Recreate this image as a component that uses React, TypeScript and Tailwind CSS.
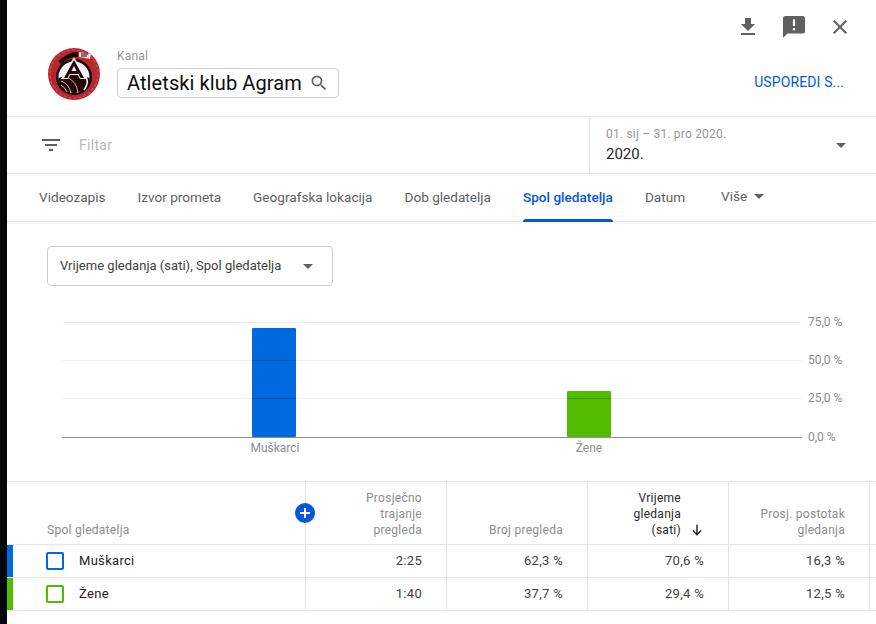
import React from "react";

const tabs = ["Videozapis", "Izvor prometa", "Geografska lokacija", "Dob gledatelja", "Spol gledatelja", "Datum"];

const rows = [
  { name: "Muškarci", color: "bg-[#0069de]", box: "border-[#0069de]", values: ["2:25", "62,3 %", "70,6 %", "16,3 %"] },
  { name: "Žene", color: "bg-[#52bd00]", box: "border-[#52bd00]", values: ["1:40", "37,7 %", "29,4 %", "12,5 %"] },
];

function Caret() {
  return <span className="h-0 w-0 border-x-[5px] border-t-[5px] border-x-transparent border-t-[#606060]" />;
}

function Logo() {
  return (
    <svg width="52" height="52" viewBox="0 0 52 52">
      <circle cx="26" cy="26" r="26" fill="#b5282e" />
      <circle cx="26" cy="26" r="24" fill="none" stroke="#c9474c" strokeWidth="1.5" strokeDasharray="3 2" />
      {/* banner lettering at the top */}
      <path d="M10 13 Q22 3 30 4 L30 9 Q20 9 13 16 Z" fill="#1c0506" />
      <path d="M31 4 L43 6 L42 11 L31 9 Z" fill="#e9dede" />
      <path d="M33 6 h7 M33 8 h6" stroke="#1c0506" strokeWidth="1" />
      {/* ball */}
      <circle cx="26" cy="29" r="18" fill="#1c0506" />
      <circle cx="26" cy="29" r="15.5" fill="#f6f1f1" />
      <path d="M10.5 30 Q26 23 41.5 30 Q41 43 26 45 Q11 43 10.5 30 Z" fill="#250507" />
      <path d="M13 33 Q21 36 23 45 M19 29 Q29 34 30 45 M13 37 Q17 39 19 44" stroke="#d9c9c9" strokeWidth="0.9" fill="none" />
      <path d="M35 26 Q43 32 36 42" stroke="#f6f1f1" strokeWidth="1.5" fill="none" />
      {/* letter */}
      <path d="M26 9 L13 31 H20 L22 27 H30 L32 31 H39 Z" fill="#f6f1f1" />
      <path d="M26 12 L16 30 H19.5 L21.5 26 H30.5 L32.5 30 H36 Z" fill="#1c0506" />
      <path d="M26 18 L23.5 23 H28.5 Z" fill="#f6f1f1" />
    </svg>
  );
}

function Chart() {
  const grid = [
    { y: 322, label: "75,0 %" },
    { y: 360, label: "50,0 %" },
    { y: 398, label: "25,0 %" },
  ];
  return (
    <svg width="869" height="170" viewBox="7 296 869 170" className="block" fontFamily="Roboto, sans-serif" fontSize="12">
      {grid.map((g) => (
        <g key={g.y}>
          <rect x="62" y={g.y} width="740" height="1" fill="#efefef" />
          <text x="808" y={g.y + 4} fill="#8c8c8c">{g.label}</text>
        </g>
      ))}
      <rect x="252" y="328" width="44" height="109" rx="1" fill="#0069de" />
      <rect x="567" y="391" width="44" height="46" rx="1" fill="#52bd00" />
      <rect x="252" y="360" width="44" height="1" fill="#000" opacity="0.2" />
      <rect x="252" y="398" width="44" height="1" fill="#000" opacity="0.2" />
      <rect x="567" y="398" width="44" height="1" fill="#000" opacity="0.2" />
      <rect x="62" y="437" width="740" height="1" fill="#8f8f8f" />
      <text x="808" y="441" fill="#8c8c8c">0,0 %</text>
      <text x="275" y="452" textAnchor="middle" fill="#8c8c8c">Muškarci</text>
      <text x="589" y="452" textAnchor="middle" fill="#8c8c8c">Žene</text>
    </svg>
  );
}

export default function App() {
  return (
    <div className="flex h-[624px] w-[876px] overflow-hidden bg-white font-['Roboto',sans-serif]">
      <div className="w-[7px] shrink-0 bg-[#050608]" />
      <div className="min-w-0 flex-1">
        {/* Top actions */}
        <div className="flex h-[117px] border-b border-[#e5e5e5]">
          <div className="flex items-start pl-[41px] pt-[48px]">
            <Logo />
            <div className="ml-[17px] mt-[1px]">
              <div className="text-[12px] leading-[14px] tracking-[0.2px] text-[#969696]">Kanal</div>
              <div className="mt-[5px] flex h-[30px] w-[222px] items-center rounded border border-[#cfcfcf] pl-[9px]">
                <span className="text-[20px] leading-none tracking-[0.1px] whitespace-nowrap text-[#0d0d0d]">Atletski klub Agram</span>
                <svg width="20" height="20" viewBox="0 0 24 24" fill="#606060" className="ml-[7px] shrink-0">
                  <path d="M15.5 14h-.79l-.28-.27A6.47 6.47 0 0 0 16 9.5 6.5 6.5 0 1 0 9.5 16c1.61 0 3.09-.59 4.23-1.57l.27.28v.79l5 4.99L20.49 19l-4.99-5zm-6 0C7.01 14 5 11.99 5 9.5S7.01 5 9.5 5 14 7.01 14 9.5 11.99 14 9.5 14z" />
                </svg>
              </div>
            </div>
          </div>
          <div className="ml-auto flex flex-col items-end pr-[32px]">
            <div className="mt-[15px] flex items-center gap-[22px]">
              <svg width="24" height="24" viewBox="0 0 24 24" fill="#606060"><path d="M19 9h-4V3H9v6H5l7 7 7-7zM5 18v2h14v-2H5z" /></svg>
              <svg width="24" height="24" viewBox="0 0 24 24" fill="#606060" className="scale-110"><path d="M20 2H4c-1.1 0-1.99.9-1.99 2L2 22l4-4h14c1.1 0 2-.9 2-2V4c0-1.1-.9-2-2-2zm-7 9h-2V5h2v6zm0 4h-2v-2h2v2z" /></svg>
              <svg width="24" height="24" viewBox="0 0 24 24" fill="#606060" className="mr-[-8px]"><path d="M19 6.41 17.59 5 12 10.59 6.41 5 5 6.41 10.59 12 5 17.59 6.41 19 12 13.41 17.59 19 19 17.59 13.41 12z" /></svg>
            </div>
            <div className="mt-[35px] text-[14px] leading-[16px] font-normal tracking-[0.12px] whitespace-nowrap text-[#0557dc]">USPOREDI S...</div>
          </div>
        </div>

        {/* Filter row */}
        <div className="flex h-[57px] border-b border-[#e5e5e5]">
          <div className="flex w-[583px] items-center border-r border-[#e5e5e5] pl-[32px]">
            <svg width="24" height="24" viewBox="0 0 24 24" fill="#606060"><path d="M10 18h4v-2h-4v2zM3 6v2h18V6H3zm3 7h12v-2H6v2z" /></svg>
            <span className="ml-[16px] text-[14px] tracking-[0.3px] text-[#b8b8b8]">Filtar</span>
          </div>
          <div className="flex flex-1 items-center justify-between pr-[30px] pl-[16px]">
            <div>
              <div className="text-[12px] leading-[14px] tracking-[0.2px] text-[#969696]">01. sij – 31. pro 2020.</div>
              <div className="mt-[4px] text-[15px] leading-[18px] text-[#282828]">2020.</div>
            </div>
            <Caret />
          </div>
        </div>

        {/* Tabs */}
        <div className="flex h-[48px] gap-[32px] border-b border-[#e5e5e5] pl-[32px] shadow-[0_1px_3px_rgba(0,0,0,0.06)]">
          {tabs.map((t) => (
            <div key={t} className="relative flex items-center">
              <span className={`text-[13.6px] whitespace-nowrap ${t === "Spol gledatelja" ? "font-medium text-[#0557dc]" : "text-[#606060]"}`}>{t}</span>
              {t === "Spol gledatelja" && <div className="absolute right-0 bottom-[-1px] left-0 h-[3px] rounded-t-sm bg-[#0557dc]" />}
            </div>
          ))}
          <div className="ml-[4px] flex items-center gap-[7px] pb-[2px]">
            <span className="text-[13.6px] text-[#606060]">Više</span>
            <Caret />
          </div>
        </div>

        {/* Metric selector */}
        <div className="pt-[24px] pl-[40px]">
          <div className="flex h-[40px] w-[286px] items-center justify-between rounded border border-[#cfcfcf] pr-[19px] pl-[12px]">
            <span className="text-[13px] tracking-[0.02px] whitespace-nowrap text-[#404040]">Vrijeme gledanja (sati), Spol gledatelja</span>
            <Caret />
          </div>
        </div>

        <div className="mt-[10px]">
          <Chart />
        </div>

        {/* Table */}
        <div className="mt-[15px] border-t border-[#e5e5e5]">
          <div className="grid h-[63px] grid-cols-[299px_141px_141px_141px_141px_1fr] border-b border-[#e5e5e5] text-[12px] leading-[16px] tracking-[0.27px] text-[#8c8c8c]">
            <div className="relative flex items-end border-r border-[#e5e5e5] pb-[6px] pl-[40px]">
              <span>Spol gledatelja</span>
              <div className="absolute top-[21px] right-[-10px] z-10 flex h-[20px] w-[20px] items-center justify-center rounded-full bg-[#0557dc]">
                <svg width="14" height="14" viewBox="0 0 14 14" fill="#fff"><path d="M6 2h2v4h4v2H8v4H6V8H2V6h4z" /></svg>
              </div>
            </div>
            <div className="flex items-end justify-end border-r border-[#e5e5e5] pr-[24px] pb-[6px] text-right">Prosječno<br />trajanje<br />pregleda</div>
            <div className="flex items-end justify-end border-r border-[#e5e5e5] pr-[24px] pb-[6px] text-right">Broj pregleda</div>
            <div className="flex items-end justify-end border-r border-[#e5e5e5] pr-[24px] pb-[6px] text-right text-[#282828]">
              <span>Vrijeme<br />gledanja<br />(sati)</span>
              <svg width="14" height="14" viewBox="0 0 24 24" fill="none" stroke="#1f1f1f" strokeWidth="2.4" className="mb-[1px] ml-[9px]"><path d="M12 3v17M5 13l7 7 7-7" /></svg>
            </div>
            <div className="flex items-end justify-end border-r border-[#e5e5e5] pr-[24px] pb-[6px] text-right">Prosj. postotak<br />gledanja</div>
            <div />
          </div>
          {rows.map((r) => (
            <div key={r.name} className="grid h-[33px] grid-cols-[299px_141px_141px_141px_141px_1fr] border-b border-[#e5e5e5] text-[13px] tracking-[0.3px] text-[#404040]">
              <div className="flex items-center border-r border-[#e5e5e5]">
                <div className={`h-full w-[6px] ${r.color}`} />
                <div className={`ml-[33px] h-[18px] w-[18px] rounded-[2px] border-2 ${r.box}`} />
                <span className="ml-[15px] text-[#1f1f1f]">{r.name}</span>
              </div>
              {r.values.map((v) => (
                <div key={v} className="flex items-center justify-end border-r border-[#e5e5e5] pr-[24px]">{v}</div>
              ))}
              <div />
            </div>
          ))}
        </div>
      </div>
    </div>
  );
}
